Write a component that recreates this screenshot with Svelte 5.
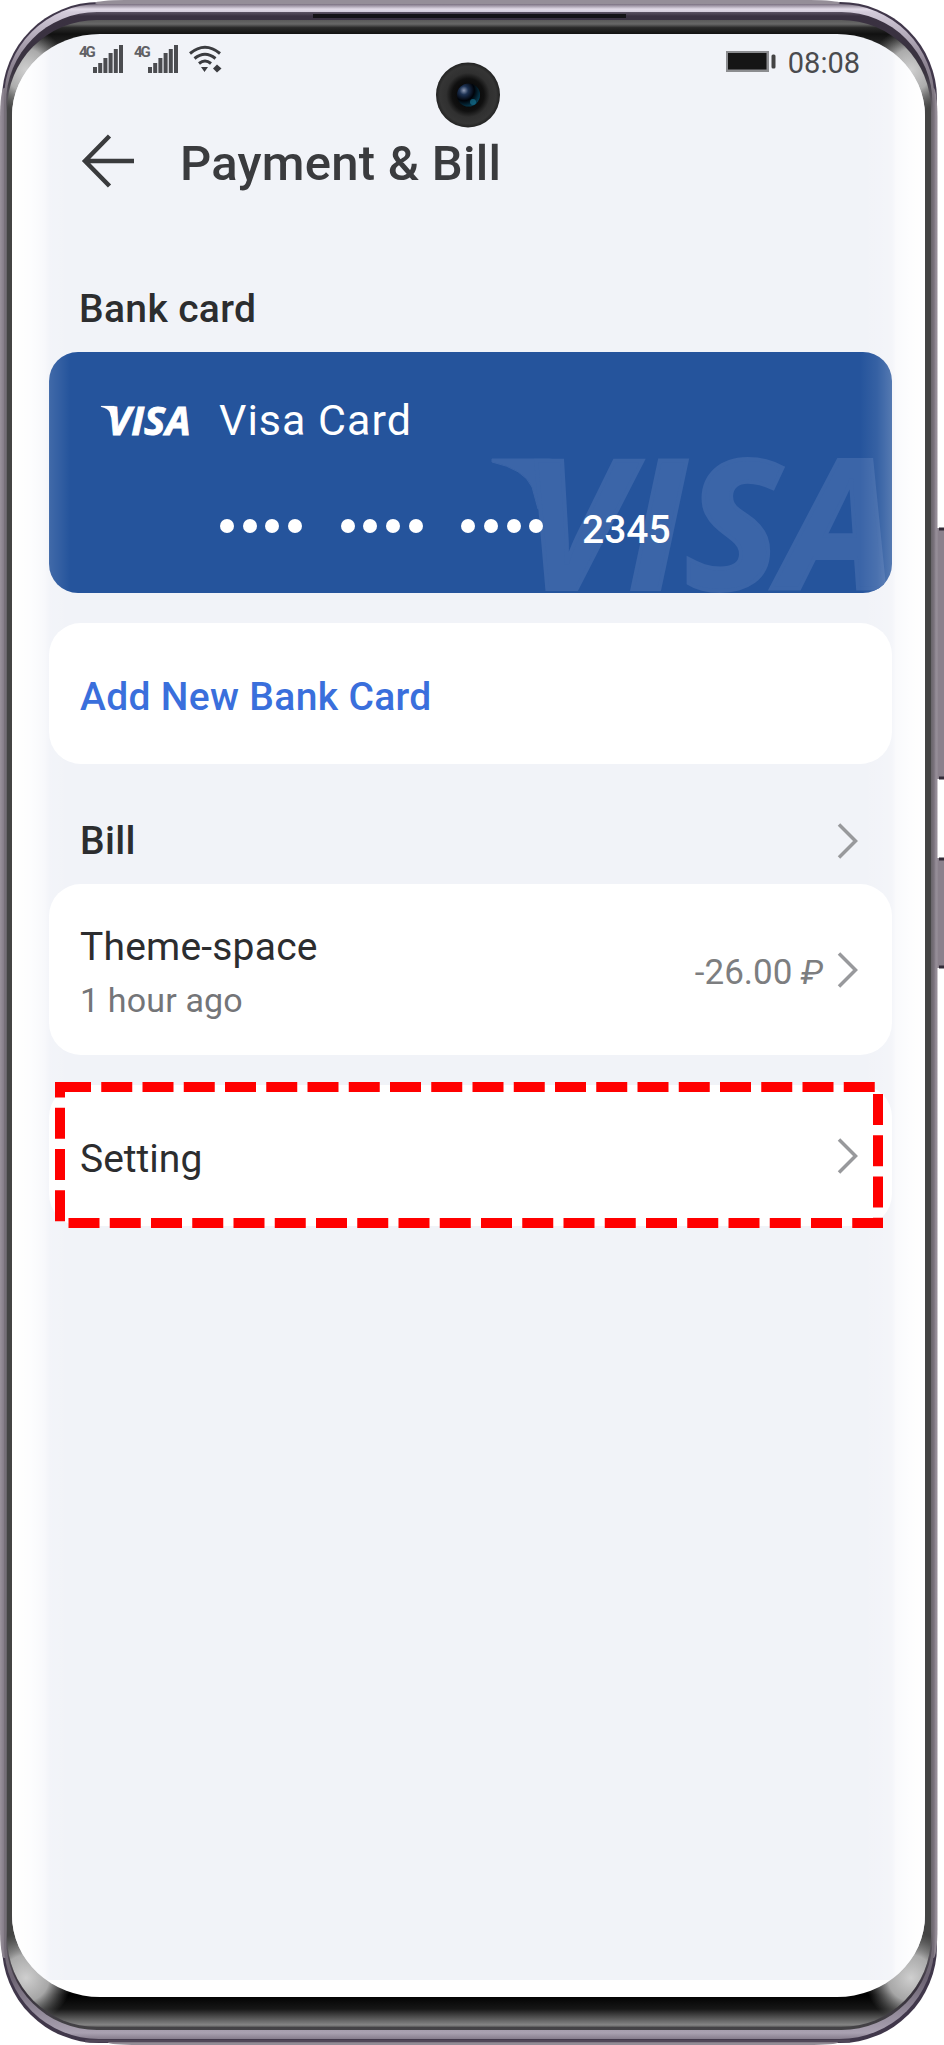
<script>
    let title = 'Payment & Bill'
    let time = '08:08'

    const card = { name: 'Visa Card', lastDigits: '2345' }
    const bill = { name: 'Theme-space', when: '1 hour ago', amount: '-26.00', currency: '₽' }

    const signals = [1, 2]
    const bars = [6, 10, 15, 20, 24, 28]
    const groups = [0, 1, 2]
    const dots = [0, 1, 2, 3]
</script>

{#snippet chevron()}
    <svg class="chevron" width="24" height="38" viewBox="0 0 24 38">
        <path d="M2 2.5 L18.5 19 L2 35.5" />
    </svg>
{/snippet}

{#snippet visa()}
    <path d="M0 0H57Q68 0 70 12L72 30L60 50H46L40 28Q32 10 0 3Z" />
    <text y="130" x="28 136 193 290">VISA</text>
{/snippet}

<div class="phone">
    <svg class="frame" width="944" height="2045" viewBox="0 0 944 2045">
        <defs>
            <linearGradient id="edge" x1="0" y1="0" x2="1" y2="0">
                <stop offset="0" stop-color="#9a929c" />
                <stop offset=".006" stop-color="#7b737f" />
                <stop offset=".994" stop-color="#7b737f" />
                <stop offset="1" stop-color="#9a929c" />
            </linearGradient>
            <linearGradient id="rim" x1="0" y1="0" x2="0" y2="1">
                <stop offset="0" stop-color="#7a7080" />
                <stop offset=".0025" stop-color="#e2dbe8" />
                <stop offset=".004" stop-color="#d3cbda" />
                <stop offset=".03" stop-color="#8e8593" />
                <stop offset=".05" stop-color="#777079" />
                <stop offset=".95" stop-color="#777079" />
                <stop offset=".97" stop-color="#6d6473" />
                <stop offset=".997" stop-color="#a9a1b1" />
                <stop offset="1" stop-color="#867d8d" />
            </linearGradient>
            <linearGradient id="groove" x1="0" y1="0" x2="0" y2="1">
                <stop offset="0" stop-color="#5d5465" />
                <stop offset=".002" stop-color="#3a3141" />
                <stop offset=".03" stop-color="#3a3440" />
                <stop offset=".05" stop-color="#6a666c" />
                <stop offset=".95" stop-color="#6a666c" />
                <stop offset=".98" stop-color="#39323e" />
                <stop offset="1" stop-color="#444346" />
            </linearGradient>
            <linearGradient id="glass" x1="0" y1="20" x2="0" y2="2027" gradientUnits="userSpaceOnUse">
                <stop offset="0" stop-color="#5a5a5a" />
                <stop offset=".002" stop-color="#686868" />
                <stop offset=".0038" stop-color="#2a2a2a" />
                <stop offset=".007" stop-color="#111" />
                <stop offset=".02" stop-color="#444" />
                <stop offset=".96" stop-color="#444" />
                <stop offset=".984" stop-color="#000" />
                <stop offset=".991" stop-color="#161616" />
                <stop offset=".999" stop-color="#858585" />
                <stop offset="1" stop-color="#555" />
            </linearGradient>
            <radialGradient id="shine">
                <stop offset="0" stop-color="#cfcfcf" />
                <stop offset=".5" stop-color="#b8b8b8" stop-opacity=".9" />
                <stop offset="1" stop-color="#777" stop-opacity="0" />
            </radialGradient>
            <clipPath id="glass-clip">
                <rect x="7" y="20" width="924" height="2007" rx="90" />
            </clipPath>
        </defs>
        <rect class="key" x="934" y="528" width="14" height="251" />
        <rect class="key" x="934" y="858" width="14" height="110" />
        <path class="key-end" d="M939 529h5M939 778h5M939 859h5M939 967h5" />
        <rect x="2" y="2" width="935" height="2041" rx="97" fill="#40374a" />
        <rect x="0" y="88" width="937.5" height="1870" rx="4" ry="30" fill="url(#edge)" />
        <rect x="95" y="0" width="745" height="6" rx="30" ry="3" fill="#958e98" />
        <rect x="108" y="2040" width="730" height="5" rx="30" ry="2.5" fill="#938c96" />
        <path d="M85 2041H850" stroke="#514758" stroke-width="2.5" />
        <rect x="4" y="4" width="930.5" height="2035" rx="95" fill="url(#rim)" />
        <rect x="6" y="12" width="926.5" height="2018" rx="91" fill="url(#groove)" />
        <rect x="7" y="20" width="924" height="2007" rx="90" fill="url(#glass)" />
        <g clip-path="url(#glass-clip)">
            <circle cx="26" cy="70" r="42" fill="url(#shine)" />
            <circle cx="911" cy="70" r="42" fill="url(#shine)" />
            <circle cx="26" cy="1978" r="46" fill="url(#shine)" />
            <circle cx="911" cy="1978" r="46" fill="url(#shine)" />
        </g>
        <path d="M313 16H626" stroke="#141216" stroke-width="4" />
    </svg>

    <main class="screen">
        <header class="status">
            <div class="network">
                {#each signals as signal}
                    <span class="signal">
                        <small>4G</small>
                        <svg width="31" height="28" viewBox="0 0 31 28">
                            {#each bars as height, i}
                                <rect x={i * 5.2} y={28 - height} width="4" {height} fill="#4b4c50" />
                            {/each}
                        </svg>
                    </span>
                {/each}
                <svg class="wifi" width="33" height="28" viewBox="0 0 33 28">
                    <path d="M1 8.500Q16 -4 31 8.500M5.500 13.500Q16 5 26.500 13.500M10 18.500Q16 13.500 22 18.500" />
                    <path class="solid" d="M12 22h7l-3.500 5zM24 23.500l4-4 4.500 4-4.500 4z" />
                </svg>
            </div>
            <div class="power">
                <svg width="52" height="24" viewBox="0 0 52 24">
                    <rect x="1" y="1" width="43" height="21" fill="#8c8d90" />
                    <rect x="3" y="3" width="38.500" height="16.500" fill="#151515" />
                    <rect x="46.500" y="4.500" width="4" height="14" rx="1.500" fill="#444" />
                </svg>
                <time>{time}</time>
            </div>
        </header>

        <svg class="camera" width="64" height="66" viewBox="0 0 64 66">
            <defs>
                <radialGradient id="lens">
                    <stop offset="0" stop-color="#000" />
                    <stop offset=".5" stop-color="#101010" />
                    <stop offset=".68" stop-color="#303030" />
                    <stop offset=".88" stop-color="#353535" />
                    <stop offset="1" stop-color="#222" />
                </radialGradient>
                <radialGradient id="pupil" cx=".3" cy=".3" r=".75">
                    <stop offset="0" stop-color="#8d99b3" />
                    <stop offset=".25" stop-color="#1c3152" />
                    <stop offset=".6" stop-color="#000309" />
                    <stop offset="1" stop-color="#063a50" />
                </radialGradient>
            </defs>
            <ellipse cx="32" cy="33" rx="32" ry="32.500" fill="url(#lens)" />
            <circle cx="32.500" cy="33" r="11.500" fill="url(#pupil)" />
            <circle cx="37" cy="40" r="3" fill="#16708f" opacity=".7" />
        </svg>

        <div class="title">
            <svg width="56" height="56" viewBox="0 0 56 56">
                <path d="M53 28H4M28.500 3L4 28L28.500 53" />
            </svg>
            <h1>{title}</h1>
        </div>

        <h2 class="bank">Bank card</h2>
        <section class="card">
            <svg class="watermark" width="420" height="135" viewBox="0 0 420 135">
                {@render visa()}
            </svg>
            <div class="line">
                <svg class="logo" width="90" height="33" viewBox="0 0 405 148">
                    {@render visa()}
                </svg>
                <span class="name">{card.name}</span>
            </div>
            <div class="number">
                {#each groups as group}
                    <span class="group">
                        {#each dots as dot}<i></i>{/each}
                    </span>
                {/each}
                <span class="digits">{card.lastDigits}</span>
            </div>
        </section>

        <section class="box add">
            <a href="#add">Add New Bank Card</a>
        </section>

        <div class="heading">
            <h2>Bill</h2>
            {@render chevron()}
        </div>

        <section class="box bill">
            <div>
                <p class="what">{bill.name}</p>
                <p class="when">{bill.when}</p>
            </div>
            <span class="amount">{bill.amount} <em>{bill.currency}</em></span>
            {@render chevron()}
        </section>

        <section class="box setting">
            <p>Setting</p>
            {@render chevron()}
            <svg class="marker" width="828" height="146" viewBox="0 0 828 146">
                <rect x="5" y="5" width="818" height="136" />
            </svg>
        </section>
    </main>
</div>

<style>
    :global(body) {
        background: #fff;
    }

    .phone {
        position: relative;
        width: 944px;
        height: 2045px;
        padding: 34px 19px 48px 12px;
        box-sizing: border-box;
        overflow: hidden;
        font-family: Roboto, "Liberation Sans", sans-serif;
        color: #2c2d2f;
    }

    .frame {
        position: absolute;
        left: 0;
        top: 0;
    }

    .key { fill: #8a818c; }
    .key-end { stroke: #332c38; stroke-width: 3; }

    .screen {
        position: relative;
        height: 1963px;
        padding: 0 33px 0 37px;
        box-sizing: border-box;
        border-radius: 88px / 82px;
        overflow: hidden;
        background: linear-gradient(#f1f3f8 1946px, #fff 1946px);
    }

    /* curved glass: content fades out towards both sides */
    .screen::after {
        content: '';
        position: absolute;
        inset: 0;
        pointer-events: none;
        background: linear-gradient(90deg, #fff 0, rgba(255, 255, 255, .85) 18px, rgba(255, 255, 255, .5) 32px, rgba(255, 255, 255, .12) 38px, rgba(255, 255, 255, .05) 50px, rgba(255, 255, 255, 0) 58px, rgba(255, 255, 255, 0) 848px, rgba(255, 255, 255, .08) 865px, rgba(255, 255, 255, .22) 880px, rgba(255, 255, 255, .6) 884px, rgba(255, 255, 255, .85) 898px, #fff 913px);
    }

    h1, h2, p {
        margin: 0;
        white-space: nowrap;
    }

    svg {
        display: block;
        flex: none;
    }

    .status {
        display: flex;
        justify-content: space-between;
        height: 66px;
        padding: 11px 32px 0 30px;
        box-sizing: border-box;
    }
    .network, .power, .signal {
        display: flex;
    }
    .network {
        gap: 10px;
    }
    .signal {
        width: 45px;
        justify-content: space-between;
    }
    .signal small {
        width: 14px;
        font-size: 15px;
        line-height: 15px;
        font-weight: 700;
        letter-spacing: -2px;
        color: #606165;
    }
    .wifi {
        stroke: #3b3c40;
        stroke-width: 3;
        fill: none;
    }
    .wifi .solid {
        fill: #3b3c40;
        stroke: none;
    }
    .power {
        gap: 11px;
        padding-top: 5px;
    }
    time {
        font-size: 29px;
        line-height: 26px;
        color: #4a4b4e;
    }

    .camera {
        position: absolute;
        left: 424px;
        top: 28px;
    }

    .title {
        display: flex;
        align-items: center;
        gap: 43px;
        height: 58px;
        padding: 0 0 0 32px;
        margin-top: 32px;
    }
    .title svg {
        fill: none;
        stroke: #3a3b3d;
        stroke-width: 4.500;
    }
    h1 {
        padding-top: 6px;
        font-size: 49px;
        line-height: 58px;
        font-weight: 500;
        letter-spacing: .25px;
        color: #3a3b3e;
    }

    h2 {
        font-size: 39px;
        line-height: 50px;
        font-weight: 500;
        letter-spacing: .35px;
    }
    .bank {
        padding: 94px 30px 17.500px;
    }

    .card {
        position: relative;
        height: 241px;
        padding: 45px 0 0 52px;
        box-sizing: border-box;
        border-radius: 29px;
        overflow: hidden;
        background: #25549c;
        color: #fff;
    }
    .watermark {
        position: absolute;
        left: 443px;
        top: 107px;
        overflow: visible;
        fill: #3b65a8;
        stroke: #3b65a8;
    }
    .watermark text, .logo text {
        font-family: "Open Sans", "Noto Sans", sans-serif;
        font-size: 180px;
        font-weight: 700;
        font-style: italic;
        stroke-width: 4;
    }
    .line {
        display: flex;
        align-items: center;
        gap: 28px;
        position: relative;
    }
    .logo {
        margin-top: 5px;
        overflow: visible;
        fill: #fff;
        stroke: #fff;
    }
    .name {
        font-size: 43px;
        line-height: 46px;
        letter-spacing: 1px;
        font-weight: 450;
    }
    .number {
        display: flex;
        align-items: center;
        position: relative;
        padding: 64px 0 0 119px;
    }
    .group {
        display: flex;
        gap: 8.700px;
        margin-right: 38.600px;
    }
    .group i {
        width: 14px;
        height: 14px;
        border-radius: 50%;
        background: #fff;
    }
    .digits {
        margin-bottom: -7px;
        font-size: 39px;
        line-height: 46px;
        font-weight: 500;
    }

    .box {
        display: flex;
        align-items: center;
        position: relative;
        height: 141px;
        padding: 0 31px;
        box-sizing: border-box;
        border-radius: 32px;
        background: #fff;
    }
    .add {
        margin-top: 30.500px;
    }
    .add a {
        padding-top: 6px;
        font-size: 39px;
        font-weight: 500;
        letter-spacing: .33px;
        color: #3a6fdc;
        text-decoration: none;
    }

    .heading {
        display: flex;
        align-items: center;
        justify-content: space-between;
        height: 50px;
        padding: 52px 31px 18px;
    }

    .chevron {
        fill: none;
        stroke: #98999c;
        stroke-width: 3.500;
    }

    .bill {
        height: 171px;
    }
    .what, .setting p {
        font-size: 39px;
        line-height: 50px;
    }
    .what {
        padding-top: 5px;
        letter-spacing: .2px;
    }
    .when {
        padding-top: 6px;
        font-size: 34px;
        line-height: 44px;
        letter-spacing: .15px;
        color: #747578;
    }
    .amount {
        margin-left: auto;
        margin-right: 14px;
        padding-top: 5px;
        font-size: 35px;
        color: #7d7e80;
    }
    .amount em {
        font-size: 34px;
    }

    .setting {
        margin-top: 30px;
        justify-content: space-between;
    }
    .setting p {
        padding-top: 6px;
    }
    .marker {
        position: absolute;
        z-index: 1;
        left: 6px;
        top: -3px;
        fill: none;
        stroke: #f00;
        stroke-width: 10;
        stroke-dasharray: 31 10.250;
    }
</style>
